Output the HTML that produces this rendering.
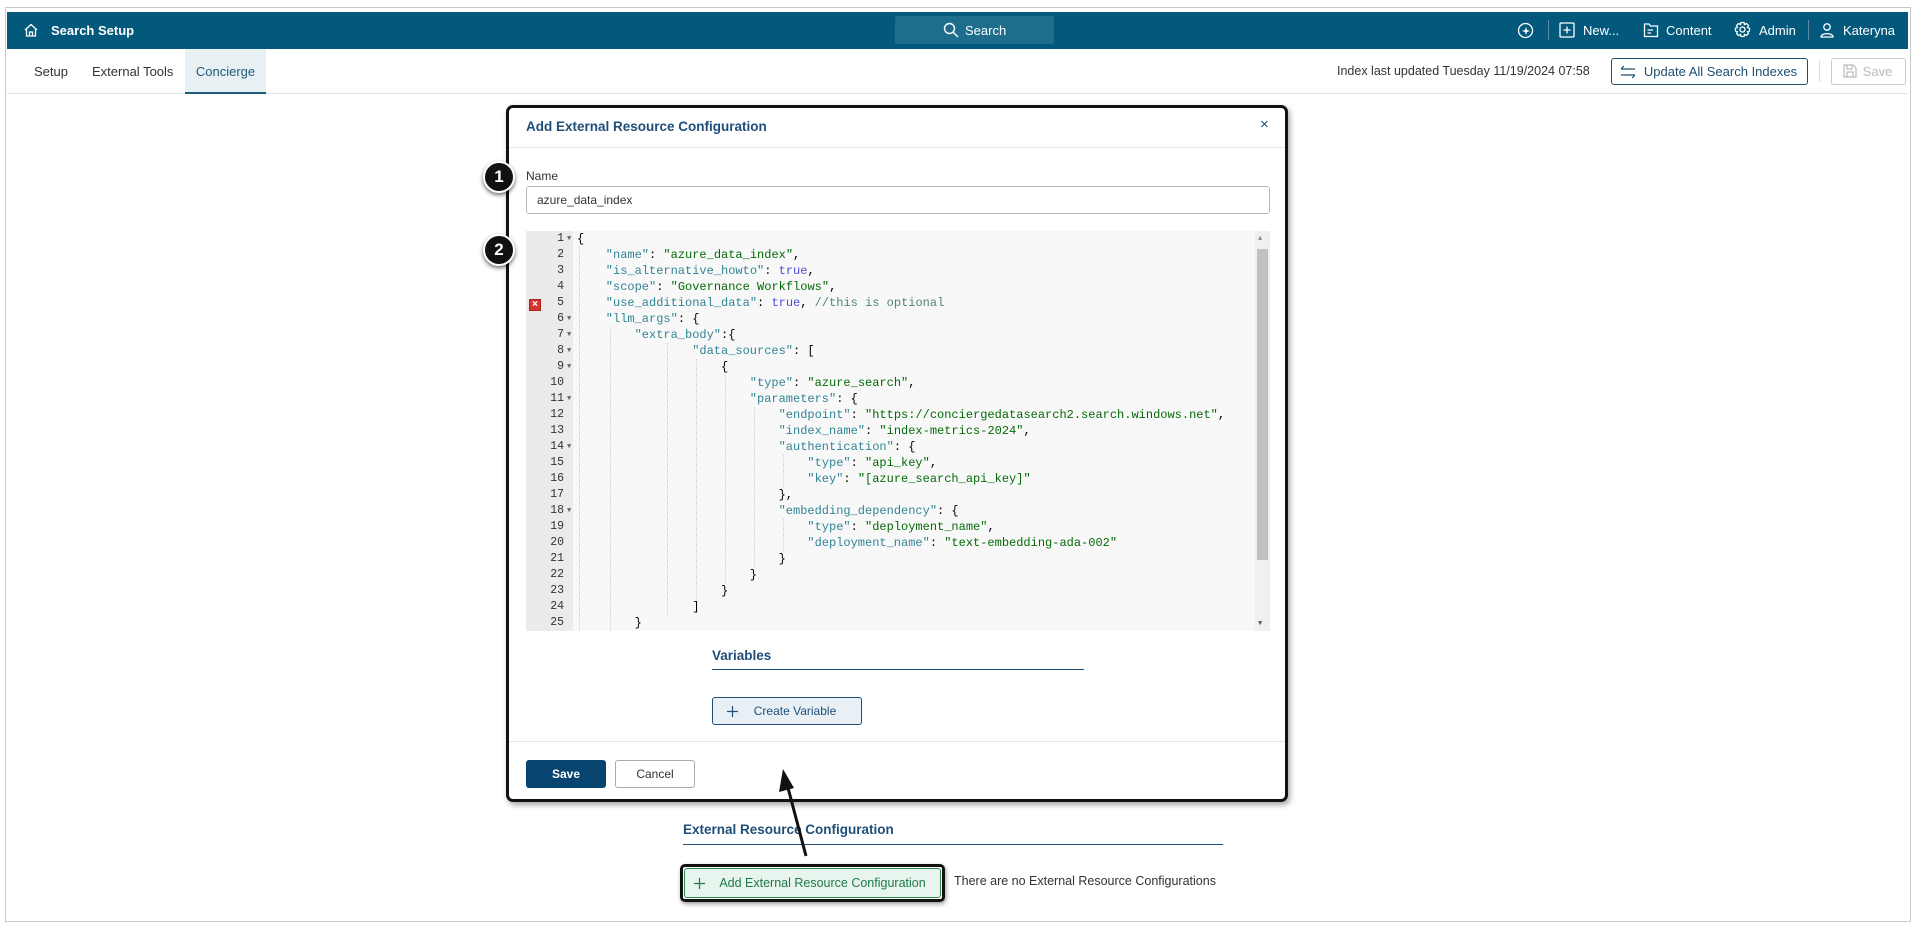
<!DOCTYPE html>
<html><head><meta charset="utf-8"><style>
*{box-sizing:border-box;margin:0;padding:0}
body{width:1918px;height:926px;position:relative;background:#fff;font-family:"Liberation Sans",sans-serif;font-size:13px;color:#333;overflow:hidden}
.a{position:absolute}
.frame{left:5px;top:7px;width:1906px;height:915px;border:1px solid #c8c8c8}
.bar{left:7px;top:12px;width:1901px;height:37px;background:#02597b;color:#fff}
.bar .t{font-weight:bold;font-size:13px}
.nav{font-size:13px;color:#fff}
.tabs{left:7px;top:49px;width:1901px;height:45px;border-bottom:1px solid #e3e3e3}
.tab{top:0;height:45px;line-height:45px;font-size:13px;color:#333}
.btn{border-radius:3px;font-size:13px;text-align:center}
.modal{left:506px;top:105px;width:782px;height:697px;border:3px solid #111;border-radius:7px;background:#fff;box-shadow:2px 3px 6px rgba(0,0,0,.35)}
.code{left:526px;top:231px;width:744px;height:400px;background:#f8f8f8;font-family:"Liberation Mono",monospace;font-size:12px;overflow:hidden}
.gut{left:0;top:0;width:47px;height:400px;background:#ebebeb}
.ln{position:absolute;left:0;width:38px;text-align:right;color:#333;height:16px;line-height:16px;font-size:11.5px}
.cl{position:absolute;height:16px;line-height:16px;white-space:pre;color:#000}
.k{color:#318495}.s{color:#036a07}.b{color:#4b4bd6}.c{color:#4c886b}
.fold{position:absolute;left:41px;font-size:7px;color:#666;line-height:16px}
.badge{width:32px;height:32px;border-radius:50%;background:#111;border:2px solid #fff;box-shadow:0 2px 4px rgba(0,0,0,.6);color:#fff;font-weight:bold;font-size:17px;text-align:center;line-height:28px}
.guide{position:absolute;width:0;border-left:1px dotted #d0d0d0}
</style></head><body>
<div class="a frame"></div>
<div class="a bar">
  <svg class="a" style="left:16px;top:10px" width="16" height="16" viewBox="0 0 16 16" fill="none" stroke="#fff" stroke-width="1.3"><path d="M2 8 L8 2.5 L14 8 M3.5 6.8 V14 H12.5 V6.8 M6.5 14 V10 H9.5 V14"/></svg>
  <div class="a t" style="left:44px;top:11px">Search Setup</div>
  <div class="a" style="left:888px;top:4px;width:159px;height:28px;background:#1e6d8d;border-radius:2px"></div>
  <svg class="a" style="left:936px;top:10px" width="16" height="16" viewBox="0 0 16 16" fill="none" stroke="#fff" stroke-width="1.4"><circle cx="6.5" cy="6.5" r="5"/><path d="M10.2 10.2 L15 15"/></svg>
  <div class="a nav" style="left:958px;top:11px">Search</div>
  <svg class="a" style="left:1510px;top:10px" width="17" height="17" viewBox="0 0 17 17" fill="none" stroke="#fff" stroke-width="1.3"><circle cx="8.5" cy="8.5" r="7"/><path d="M9 5 L10 8 L13 9 L10 10 L9 13 L8 10 L5 9 L8 8Z" fill="#fff" stroke="none"/></svg>
  <div class="a" style="left:1541px;top:8px;width:1px;height:20px;background:#5d8ca3"></div>
  <svg class="a" style="left:1552px;top:10px" width="16" height="16" viewBox="0 0 16 16" fill="none" stroke="#fff" stroke-width="1.3"><rect x="1" y="1" width="14" height="14" rx="1"/><path d="M8 4.5 V11.5 M4.5 8 H11.5"/></svg>
  <div class="a nav" style="left:1576px;top:11px">New...</div>
  <svg class="a" style="left:1636px;top:10px" width="16" height="16" viewBox="0 0 16 16" fill="none" stroke="#fff" stroke-width="1.3"><path d="M1.5 2 H6 L7.5 4 H14.5 V14.5 H1.5Z M4.5 8 H10 M4.5 11 H8"/></svg>
  <div class="a nav" style="left:1659px;top:11px">Content</div>
  <svg class="a" style="left:1727px;top:9px" width="17" height="17" viewBox="0 0 17 17" fill="none" stroke="#fff" stroke-width="1.3"><circle cx="8.5" cy="8.5" r="2.5"/><path d="M7 1.5 H10 L10.5 3.5 L12.5 2.5 L14.5 4.5 L13.5 6.5 L15.5 7 V10 L13.5 10.5 L14.5 12.5 L12.5 14.5 L10.5 13.5 L10 15.5 H7 L6.5 13.5 L4.5 14.5 L2.5 12.5 L3.5 10.5 L1.5 10 V7 L3.5 6.5 L2.5 4.5 L4.5 2.5 L6.5 3.5Z"/></svg>
  <div class="a nav" style="left:1752px;top:11px">Admin</div>
  <div class="a" style="left:1801px;top:8px;width:1px;height:20px;background:#5d8ca3"></div>
  <svg class="a" style="left:1812px;top:10px" width="16" height="16" viewBox="0 0 16 16" fill="none" stroke="#fff" stroke-width="1.3"><circle cx="8" cy="5" r="3.2"/><path d="M2 15 C2 10.5 14 10.5 14 15Z"/></svg>
  <div class="a nav" style="left:1836px;top:11px">Kateryna</div>
</div>
<div class="a tabs">
  <div class="a tab" style="left:27px">Setup</div>
  <div class="a tab" style="left:85px">External Tools</div>
  <div class="a tab" style="left:178px;width:81px;background:#e9f0f4;color:#1e5a7a;text-align:center;border-bottom:2px solid #1e5a7a">Concierge</div>
  <div class="a" style="left:1330px;top:15px;font-size:12.5px">Index last updated Tuesday 11/19/2024 07:58</div>
  <div class="a btn" style="left:1604px;top:9px;width:197px;height:27px;border:1px solid #1e4f72;color:#1e4f72;line-height:25px;padding-left:22px">Update All Search Indexes</div>
  <svg class="a" style="left:1613px;top:16px" width="16" height="14" viewBox="0 0 16 14" fill="none" stroke="#1e4f72" stroke-width="1.2"><path d="M1 4 H15 M1 4 L4 1 M15 10 H1 M15 10 L12 13"/></svg>
  <div class="a" style="left:1812px;top:11px;width:1px;height:22px;background:#ddd"></div>
  <div class="a btn" style="left:1824px;top:9px;width:75px;height:27px;border:1px solid #ccc;color:#bbb;line-height:25px;padding-left:18px">Save</div>
  <svg class="a" style="left:1836px;top:15px" width="14" height="14" viewBox="0 0 14 14" fill="none" stroke="#bbb" stroke-width="1.2"><path d="M1 1 H10 L13 4 V13 H1Z M4 1 V5 H9 V1 M4 13 V8 H10 V13"/></svg>
</div>

<div class="a modal">
  <div class="a" style="left:17px;top:11px;font-weight:bold;color:#1f4e79;font-size:13.5px">Add External Resource Configuration</div>
  <div class="a" style="left:751px;top:8px;color:#1f4e79;font-size:15px">×</div>
  <div class="a" style="left:0;top:39px;width:776px;height:1px;background:#e5e5e5"></div>
  <div class="a" style="left:17px;top:61px;font-size:12px">Name</div>
  <div class="a" style="left:17px;top:78px;width:744px;height:28px;border:1px solid #b8b8b8;border-radius:3px;padding-left:10px;line-height:26px;font-size:12px">azure_data_index</div>
  <div class="a" style="left:203px;top:540px;font-weight:bold;color:#1f4e79;font-size:13.5px">Variables</div>
  <div class="a" style="left:203px;top:561px;width:372px;height:1px;background:#1f4e79"></div>
  <div class="a btn" style="left:203px;top:589px;width:150px;height:28px;border:1px solid #1f4e79;background:#e9f0f5;color:#1f4e79;line-height:26px;padding-left:16px;font-size:12px">Create Variable</div>
  <svg class="a" style="left:218px;top:598px" width="11" height="11" viewBox="0 0 11 11" stroke="#1f4e79" stroke-width="1.2"><path d="M5.5 0 V11 M0 5.5 H11"/></svg>
  <div class="a" style="left:0;top:633px;width:776px;height:1px;background:#e5e5e5"></div>
  <div class="a btn" style="left:17px;top:652px;width:80px;height:28px;background:#07446f;color:#fff;line-height:28px;font-weight:bold;font-size:12px">Save</div>
  <div class="a btn" style="left:106px;top:652px;width:80px;height:28px;border:1px solid #aaa;line-height:26px;font-size:12px">Cancel</div>
</div>

<div class="a code">
  <div class="a gut"></div>
  <div class="a" style="left:729px;top:0;width:15px;height:400px;background:#f0f0f0"></div>
  <div class="a" style="left:731px;top:18px;width:11px;height:311px;background:#c1c1c1"></div>
  <div class="a" style="left:732px;top:4px;font-size:7px;color:#888">▲</div>
  <div class="a" style="left:732px;top:389px;font-size:7px;color:#555">▼</div>
  <div class="a" style="left:3px;top:68px;width:12px;height:12px;background:#d9342b;border:1px solid #a22;color:#fff;font-size:10px;line-height:10px;text-align:center;font-family:'Liberation Sans',sans-serif;font-weight:bold">×</div>
  <div id="lines"></div>
</div>
<script>
var L=[[0,'{',1],[1,'<span class=k>"name"</span>: <span class=s>"azure_data_index"</span>,'],[1,'<span class=k>"is_alternative_howto"</span>: <span class=b>true</span>,'],[1,'<span class=k>"scope"</span>: <span class=s>"Governance Workflows"</span>,'],[1,'<span class=k>"use_additional_data"</span>: <span class=b>true</span>, <span class=c>//this is optional</span>'],[1,'<span class=k>"llm_args"</span>: {',1],[2,'<span class=k>"extra_body"</span>:{',1],[4,'<span class=k>"data_sources"</span>: [',1],[5,'{',1],[6,'<span class=k>"type"</span>: <span class=s>"azure_search"</span>,'],[6,'<span class=k>"parameters"</span>: {',1],[7,'<span class=k>"endpoint"</span>: <span class=s>"https://conciergedatasearch2.search.windows.net"</span>,'],[7,'<span class=k>"index_name"</span>: <span class=s>"index-metrics-2024"</span>,'],[7,'<span class=k>"authentication"</span>: {',1],[8,'<span class=k>"type"</span>: <span class=s>"api_key"</span>,'],[8,'<span class=k>"key"</span>: <span class=s>"[azure_search_api_key]"</span>'],[7,'},'],[7,'<span class=k>"embedding_dependency"</span>: {',1],[8,'<span class=k>"type"</span>: <span class=s>"deployment_name"</span>,'],[8,'<span class=k>"deployment_name"</span>: <span class=s>"text-embedding-ada-002"</span>'],[7,'}'],[6,'}'],[5,'}'],[4,']'],[2,'}']];
var h='';
for(var i=0;i<L.length;i++){var y=i*16;h+='<div class="ln" style="top:'+y+'px">'+(i+1)+'</div>';if(L[i][2])h+='<div class="fold" style="top:'+y+'px">▼</div>';h+='<div class="cl" style="top:'+y+'px;left:'+(51+L[i][0]*28.8)+'px">'+L[i][1]+'</div>';
for(var g=1;g<=L[i][0];g++){if(g==3)continue;h+='<div class="guide" style="top:'+y+'px;height:16px;left:'+(53+(g-1)*28.8+ (g>1?2:0))+'px"></div>';}}
document.getElementById('lines').innerHTML=h;
</script>

<div class="a badge" style="left:483px;top:161px">1</div>
<div class="a badge" style="left:483px;top:234px">2</div>

<div class="a" style="left:683px;top:822px;font-weight:bold;color:#1f4e79;font-size:13.5px">External Resource Configuration</div>
<div class="a" style="left:683px;top:844px;width:540px;height:1px;background:#1f4e79"></div>
<div class="a" style="left:680px;top:864px;width:265px;height:38px;border:3px solid #111;border-radius:5px;box-shadow:1px 2px 4px rgba(0,0,0,.4)"></div>
<div class="a btn" style="left:684px;top:868px;width:257px;height:30px;border:1px solid #2f8a55;background:#e8f4ee;color:#1e7a45;line-height:28px;padding-left:20px;font-size:12.5px">Add External Resource Configuration</div>
<svg class="a" style="left:694px;top:878px" width="11" height="11" viewBox="0 0 11 11" stroke="#1e7a45" stroke-width="1.2"><path d="M5.5 0 V11 M0 5.5 H11"/></svg>
<div class="a" style="left:954px;top:874px;font-size:12.5px">There are no External Resource Configurations</div>
<svg class="a" style="left:0;top:0" width="1918" height="926"><path d="M806 856 L787 784" stroke="#111" stroke-width="3"/><path d="M783 769 L779 792 L794 788Z" fill="#111"/></svg>
</body></html>
